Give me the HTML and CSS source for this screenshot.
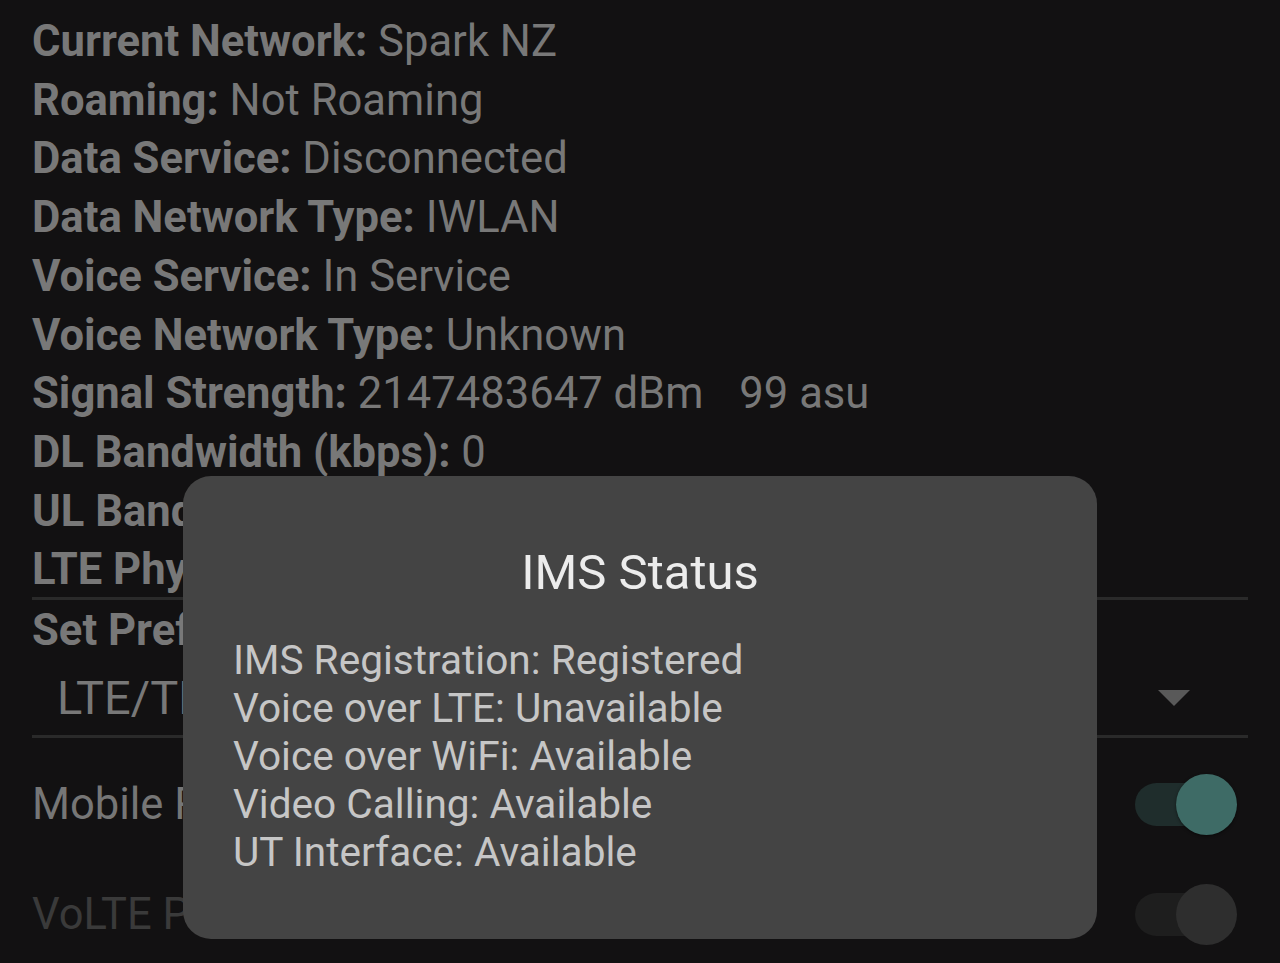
FILE: index.html
```html
<!DOCTYPE html>
<html lang="en">
<head>
    <meta charset="UTF-8">
    <title>Phone Info</title>
    <link rel="stylesheet" href="styles.css">
</head>
<body>
    <div class="screen">
        <div class="info">
            <div class="line"><b>Current Network:</b> Spark NZ</div>
            <div class="line"><b>Roaming:</b> Not Roaming</div>
            <div class="line"><b>Data Service:</b> Disconnected</div>
            <div class="line"><b>Data Network Type:</b> IWLAN</div>
            <div class="line"><b>Voice Service:</b> In Service</div>
            <div class="line"><b>Voice Network Type:</b> Unknown</div>
            <div class="line"><b>Signal Strength:</b> 2147483647 dBm <span class="gap"></span>99 asu</div>
            <div class="line"><b>DL Bandwidth (kbps):</b> 0</div>
            <div class="line"><b>UL Bandwidth (kbps):</b> 0</div>
            <div class="line"><b>LTE Physical Channel Config:</b></div>
        </div>

        <div class="divider first"></div>
        <div class="line pref"><b>Set Preferred Network Type:</b></div>
        <div class="spinner">
            <span>LTE/TDSCDMA/GSM/WCDMA</span>
            <span class="arrow"></span>
        </div>
        <div class="divider"></div>

        <div class="switches">
            <div class="switch-row">
                <span>Mobile Radio Power</span>
                <span class="switch on"><span class="thumb"></span></span>
            </div>
            <div class="switch-row disabled">
                <span>VoLTE Provisioned</span>
                <span class="switch"><span class="thumb"></span></span>
            </div>
        </div>

        <div class="dialog">
            <h2>IMS Status</h2>
            <div class="dialog-body">
                <div>IMS Registration: Registered</div>
                <div>Voice over LTE: Unavailable</div>
                <div>Voice over WiFi: Available</div>
                <div>Video Calling: Available</div>
                <div>UT Interface: Available</div>
            </div>
        </div>
    </div>
</body>
</html>
```

FILE: styles.css
```css
html, body {
    margin: 0;
    height: 100%;
    background: #121112;
    overflow: hidden;
}

body {
    font-family: Roboto, "Noto Sans", sans-serif;
    color: #787878;
}

.screen {
    position: relative;
    width: 1280px;
    height: 963px;
    padding: 13px 32px 0 32px;
    box-sizing: border-box;
}

.line {
    font-size: 43.6px;
    line-height: 58.7px;
    white-space: nowrap;
}

.line b {
    font-weight: 700;
}

.gap {
    display: inline-block;
    width: 25px;
}

.divider {
    height: 3px;
    background: #2a2a2a;
}

.divider.first {
    margin-top: -3px;
}

.pref {
    margin-top: 2px;
}

.spinner {
    display: flex;
    align-items: center;
    justify-content: space-between;
    height: 74px;
    padding: 0 58px 0 25px;
    font-size: 47px;
    white-space: nowrap;
}

.arrow {
    width: 0;
    height: 0;
    border-left: 16px solid transparent;
    border-right: 16px solid transparent;
    border-top: 16px solid #595959;
}

.switches {
    margin-top: 12px;
}

.switch-row {
    display: flex;
    align-items: center;
    justify-content: space-between;
    height: 110px;
    font-size: 43.5px;
    color: #767676;
    white-space: nowrap;
}

.switch-row.disabled {
    color: #3a3a3a;
}

.switch {
    position: relative;
    width: 92px;
    height: 43px;
    margin-right: 21px;
    border-radius: 22px;
    background: #1e1e1e;
}

.switch .thumb {
    position: absolute;
    right: -10px;
    top: -9px;
    width: 61px;
    height: 61px;
    border-radius: 50%;
    background: #2e2e2e;
}

.switch.on {
    background: #1f2d2c;
}

.switch.on .thumb {
    background: #3e6b66;
    box-shadow: 0 1px 3px rgba(0, 0, 0, 0.5);
}

.dialog {
    position: absolute;
    left: 183px;
    top: 476px;
    width: 914px;
    height: 463px;
    box-sizing: border-box;
    padding: 67px 50px 0 50px;
    background: #444444;
    border-radius: 28px;
}

.dialog h2 {
    margin: 0;
    text-align: center;
    font-size: 49px;
    font-weight: 400;
    line-height: 60px;
    color: #ececec;
}

.dialog-body {
    margin-top: 33px;
    font-size: 40.6px;
    line-height: 48px;
    color: #c6c6c6;
}
```
